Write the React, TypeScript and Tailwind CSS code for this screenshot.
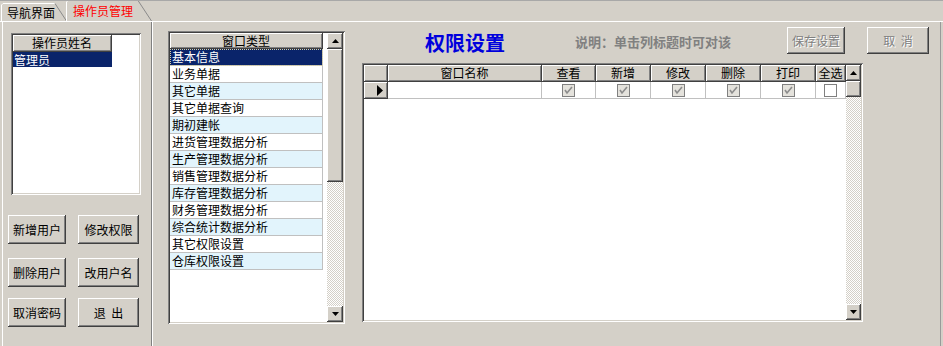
import { useState } from "react";

const raised = "shadow-[inset_-1px_-1px_0_#404040,inset_1px_1px_0_#ffffff,inset_-2px_-2px_0_#808080]";
const sunken = "shadow-[inset_1px_1px_0_#808080,inset_-1px_-1px_0_#ffffff,inset_2px_2px_0_#404040,inset_-2px_-2px_0_#d4d0c8]";
const headCell = "shadow-[inset_1px_1px_0_#ffffff,inset_-1px_-1px_0_#808080] border-r border-b border-[#404040]";
const checker = "bg-[image:repeating-conic-gradient(#d4d0c8_0%_25%,#ffffff_0%_50%)] bg-[length:2px_2px]";

const windowTypes = [
  "基本信息",
  "业务单据",
  "其它单据",
  "其它单据查询",
  "期初建帐",
  "进货管理数据分析",
  "生产管理数据分析",
  "销售管理数据分析",
  "库存管理数据分析",
  "财务管理数据分析",
  "综合统计数据分析",
  "其它权限设置",
  "仓库权限设置",
];

const columns = [
  { label: "查看", w: "w-[54px]", checked: true },
  { label: "新增", w: "w-[55px]", checked: true },
  { label: "修改", w: "w-[55px]", checked: true },
  { label: "删除", w: "w-[55px]", checked: true },
  { label: "打印", w: "w-[55px]", checked: true },
  { label: "全选", w: "w-[30px]", checked: false },
];

function Arrow({ up }: { up?: boolean }) {
  return (
    <div className={`h-[16px] w-full bg-[#d4d0c8] flex items-center justify-center ${raised}`}>
      <svg width="7" height="4" viewBox="0 0 7 4">
        {up ? <polygon points="3.5,0 7,4 0,4" fill="#000" /> : <polygon points="0,0 7,0 3.5,4" fill="#000" />}
      </svg>
    </div>
  );
}

function ScrollBar({ thumbClass, w }: { thumbClass: string; w: string }) {
  return (
    <div className={`${w} h-full flex flex-col`}>
      <Arrow up />
      <div className={`${thumbClass} bg-[#d4d0c8] ${raised}`} />
      <div className={`flex-1 ${checker}`} />
      <Arrow />
    </div>
  );
}

function Button({ label, w, disabled }: { label: string; w: string; disabled?: boolean }) {
  return (
    <button
      className={`${w} h-[29px] bg-[#d4d0c8] ${raised} text-[12px] leading-none flex items-center justify-center whitespace-pre ${
        disabled ? "text-[#808080] [text-shadow:1px_1px_0_#ffffff]" : "text-black"
      }`}
    >
      {label}
    </button>
  );
}

function Check({ checked }: { checked: boolean }) {
  return (
    <div
      className={`w-[13px] h-[13px] border border-[#808080] flex items-center justify-center ${
        checked ? "bg-[#e4e2dc]" : "bg-white"
      }`}
    >
      {checked && (
        <svg width="9" height="9" viewBox="0 0 9 9">
          <polyline points="1,4 3,7 8,1" fill="none" stroke="#8c8c8c" strokeWidth="1.6" />
        </svg>
      )}
    </div>
  );
}

function Tab({ label, active, w, h, slant }: { label: string; active?: boolean; w: number; h: number; slant: number }) {
  const cls = active ? "w-[86px] h-[21px] pl-[7px] -ml-px" : "w-[66px] h-[18px] pl-[6px]";
  return (
    <div className={`relative ${cls} flex items-center`}>
      <svg className="absolute inset-0" width={w} height={h} viewBox={`0 0 ${w} ${h}`}>
        <polyline points={`0.5,${h} 0.5,2 2,0.5 ${w - slant},0.5`} fill="none" stroke="#ffffff" />
        <line x1={w - slant} y1="0.5" x2={w - 0.5} y2={h} stroke="#8a8a8a" />
      </svg>
      <span className={`relative text-[12px] leading-none mt-[1px] ${active ? "text-[#ff0000]" : "text-black"}`}>{label}</span>
    </div>
  );
}

export default function App() {
  const [selected, setSelected] = useState(0);

  return (
    <div className="w-[943px] h-[346px] bg-[#d4d0c8] overflow-hidden flex flex-col font-['SimSun','Noto_Sans_CJK_SC',sans-serif] text-black border-t border-[#a8a8a8]">
      {/* tab strip */}
      <div className="h-[20px] flex items-end pl-px">
        <Tab label="导航界面" w={66} h={18} slant={12} />
        <Tab label="操作员管理" active w={86} h={21} slant={14} />
      </div>

      <div className="flex-1 flex border-t border-white min-h-0">
        {/* left panel */}
        <div className="ml-[2px] w-[150px] border-l border-white border-r border-r-[#808080] flex flex-col">
          <div className={`ml-[8px] mt-[11px] w-[130px] h-[162px] bg-white p-[2px] ${sunken}`}>
            <div className={`w-[99px] h-[17px] bg-[#d4d0c8] ${headCell} text-[12px] leading-none flex items-center justify-center`}>
              操作员姓名
            </div>
            <div className="w-[99px] h-[15px] bg-[#0a246a] text-white text-[12px] leading-none flex items-center pl-[1px]">管理员</div>
          </div>

          <div className="ml-[5px] mt-[20px] flex flex-col">
            <div className="flex gap-[12px]">
              <Button label="新增用户" w="w-[58px]" />
              <Button label="修改权限" w="w-[61px]" />
            </div>
            <div className="flex gap-[12px] mt-[14px]">
              <Button label="删除用户" w="w-[58px]" />
              <Button label="改用户名" w="w-[61px]" />
            </div>
            <div className="flex gap-[12px] mt-[11px]">
              <Button label="取消密码" w="w-[58px]" />
              <Button label="退  出" w="w-[61px]" />
            </div>
          </div>
        </div>
        <div className="w-px bg-white" />

        {/* window type list */}
        <div className={`ml-[15px] mt-[9px] w-[177px] h-[293px] bg-white p-[2px] flex ${sunken}`}>
          <div className="w-[153px] flex flex-col">
            <div className={`h-[16px] bg-[#d4d0c8] ${headCell} text-[12px] leading-none flex items-center justify-center`}>窗口类型</div>
            {windowTypes.map((t, i) => (
              <div
                key={t}
                onClick={() => setSelected(i)}
                className={`h-[17px] border-b border-r border-[#c0c0c0] text-[12px] leading-none flex items-center pl-[2px] ${
                  i === selected
                    ? "bg-[#0a246a] text-white outline outline-1 outline-dotted outline-[#d8d0a0] -outline-offset-1"
                    : i % 2 === 0
                    ? "bg-[#e2f4fc]"
                    : "bg-white"
                }`}
              >
                {t}
              </div>
            ))}
          </div>
          <div className="w-[4px]" />
          <ScrollBar thumbClass="h-[133px]" w="w-[16px]" />
        </div>

        {/* permission settings */}
        <div className="ml-[17px] w-[570px] flex flex-col">
          <div className="h-[41px] flex items-start">
            <div className="ml-[63px] w-[82px] mt-[9px] text-[20px] leading-[24px] font-bold text-[#0000dd] whitespace-nowrap">权限设置</div>
            <div className="ml-[68px] w-[157px] mt-[12px] text-[13px] leading-[16px] font-bold text-[#808080] whitespace-nowrap">
              说明：单击列标题时可对该
            </div>
            <div className="ml-[55px] mt-[5px] flex gap-[22px]">
              <Button label="保存设置" w="w-[58px] !h-[27px]" disabled />
              <Button label="取  消" w="w-[62px] !h-[27px]" disabled />
            </div>
          </div>

          <div className={`w-[501px] h-[259px] bg-white p-[2px] flex ${sunken}`}>
            <div className="w-[482px] flex flex-col">
              <div className="flex h-[17px] bg-[#d4d0c8]">
                <div className={`w-[24px] ${headCell}`} />
                <div className={`w-[154px] ${headCell} text-[12px] leading-none flex items-center justify-center`}>窗口名称</div>
                {columns.map((c) => (
                  <div key={c.label} className={`${c.w} ${headCell} text-[12px] leading-none flex items-center justify-center`}>
                    {c.label}
                  </div>
                ))}
              </div>
              <div className="flex h-[17px]">
                <div className={`w-[24px] bg-[#d4d0c8] ${headCell} flex items-center justify-end pr-[4px]`}>
                  <svg width="6" height="11" viewBox="0 0 6 11">
                    <polygon points="0,0 6,5.5 0,11" fill="#000" />
                  </svg>
                </div>
                <div className="w-[154px] border-r border-b border-[#c0c0c0]" />
                {columns.map((c) => (
                  <div key={c.label} className={`${c.w} border-r border-b border-[#c0c0c0] flex items-center justify-center`}>
                    <Check checked={c.checked} />
                  </div>
                ))}
              </div>
            </div>
            <div className="ml-auto h-full">
              <ScrollBar thumbClass="h-[16px]" w="w-[15px]" />
            </div>
          </div>
        </div>

        <div className="flex-1" />
        <div className="w-px bg-[#9a9a9a]" />
        <div className="w-[2px]" />
      </div>
    </div>
  );
}
